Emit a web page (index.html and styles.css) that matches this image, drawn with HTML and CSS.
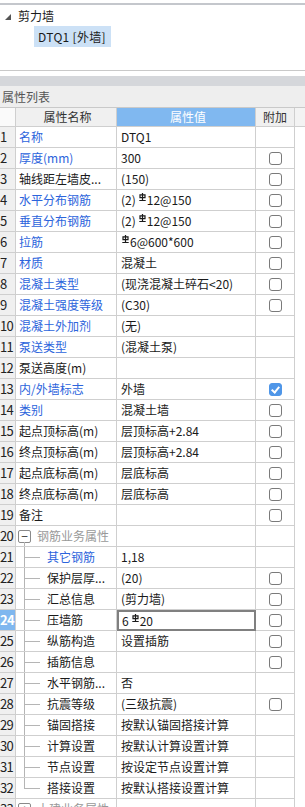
FILE: index.html
```html
<!DOCTYPE html>
<html lang="zh-CN">
<head>
    <meta charset="UTF-8">
    <meta name="viewport" content="width=device-width, initial-scale=1.0">
    <title>属性列表</title>
    <link rel="stylesheet" href="styles.css">
</head>
<body>
    <!-- 构件列表 -->
    <div class="top-line"></div>
    <div class="tree">
        <div class="tree-node"><span class="tri"></span>剪力墙</div>
        <div class="tree-leaf"><span class="sel">DTQ1 [外墙]</span></div>
    </div>
    <div class="gap"></div>
    <div class="band"></div>

    <!-- 属性列表 -->
    <div class="panel-title">属性列表</div>
    <div class="grid">
        <div class="row head">
            <div class="c0"></div>
            <div class="c1">属性名称</div>
            <div class="c2 on">属性值</div>
            <div class="c3">附加</div>
        </div>
        <div class="row"><div class="c0">1</div><div class="c1 blue">名称</div><div class="c2">DTQ1</div><div class="c3"></div></div>
        <div class="row"><div class="c0">2</div><div class="c1 blue">厚度(mm)</div><div class="c2">300</div><div class="c3"><i class="ck"></i></div></div>
        <div class="row"><div class="c0">3</div><div class="c1">轴线距左墙皮...</div><div class="c2">(150)</div><div class="c3"><i class="ck"></i></div></div>
        <div class="row"><div class="c0">4</div><div class="c1 blue">水平分布钢筋</div><div class="c2">(2)<svg class="gj" viewBox="0 0 7 8"><path d="M3.5 0v7.5M0.3 7.5h6.4M1 1.8h5v2.8h-5z"/></svg>12@150</div><div class="c3"><i class="ck"></i></div></div>
        <div class="row"><div class="c0">5</div><div class="c1 blue">垂直分布钢筋</div><div class="c2">(2)<svg class="gj" viewBox="0 0 7 8"><path d="M3.5 0v7.5M0.3 7.5h6.4M1 1.8h5v2.8h-5z"/></svg>12@150</div><div class="c3"><i class="ck"></i></div></div>
        <div class="row"><div class="c0">6</div><div class="c1 blue">拉筋</div><div class="c2"><svg class="gj first" viewBox="0 0 7 8"><path d="M3.5 0v7.5M0.3 7.5h6.4M1 1.8h5v2.8h-5z"/></svg>6@600*600</div><div class="c3"><i class="ck"></i></div></div>
        <div class="row"><div class="c0">7</div><div class="c1 blue">材质</div><div class="c2">混凝土</div><div class="c3"><i class="ck"></i></div></div>
        <div class="row"><div class="c0">8</div><div class="c1 blue">混凝土类型</div><div class="c2">(现浇混凝土碎石&lt;20)</div><div class="c3"><i class="ck"></i></div></div>
        <div class="row"><div class="c0">9</div><div class="c1 blue">混凝土强度等级</div><div class="c2">(C30)</div><div class="c3"><i class="ck"></i></div></div>
        <div class="row"><div class="c0">10</div><div class="c1 blue">混凝土外加剂</div><div class="c2">(无)</div><div class="c3"></div></div>
        <div class="row"><div class="c0">11</div><div class="c1 blue">泵送类型</div><div class="c2">(混凝土泵)</div><div class="c3"></div></div>
        <div class="row"><div class="c0">12</div><div class="c1">泵送高度(m)</div><div class="c2"></div><div class="c3"></div></div>
        <div class="row"><div class="c0">13</div><div class="c1 blue">内/外墙标志</div><div class="c2">外墙</div><div class="c3"><i class="ck on"></i></div></div>
        <div class="row"><div class="c0">14</div><div class="c1 blue">类别</div><div class="c2">混凝土墙</div><div class="c3"><i class="ck"></i></div></div>
        <div class="row"><div class="c0">15</div><div class="c1">起点顶标高(m)</div><div class="c2">层顶标高+2.84</div><div class="c3"><i class="ck"></i></div></div>
        <div class="row"><div class="c0">16</div><div class="c1">终点顶标高(m)</div><div class="c2">层顶标高+2.84</div><div class="c3"><i class="ck"></i></div></div>
        <div class="row"><div class="c0">17</div><div class="c1">起点底标高(m)</div><div class="c2">层底标高</div><div class="c3"><i class="ck"></i></div></div>
        <div class="row"><div class="c0">18</div><div class="c1">终点底标高(m)</div><div class="c2">层底标高</div><div class="c3"><i class="ck"></i></div></div>
        <div class="row"><div class="c0">19</div><div class="c1">备注</div><div class="c2"></div><div class="c3"><i class="ck"></i></div></div>
        <div class="row"><div class="c0">20</div><div class="c1 group open"><i class="tog">−</i>钢筋业务属性</div><div class="c2"></div><div class="c3"></div></div>
        <div class="row"><div class="c0">21</div><div class="c1 sub blue">其它钢筋</div><div class="c2">1,18</div><div class="c3"></div></div>
        <div class="row"><div class="c0">22</div><div class="c1 sub">保护层厚...</div><div class="c2">(20)</div><div class="c3"><i class="ck"></i></div></div>
        <div class="row"><div class="c0">23</div><div class="c1 sub">汇总信息</div><div class="c2">(剪力墙)</div><div class="c3"><i class="ck"></i></div></div>
        <div class="row cur"><div class="c0">24</div><div class="c1 sub">压墙筋</div><div class="c2 edit">6<svg class="gj" viewBox="0 0 7 8"><path d="M3.5 0v7.5M0.3 7.5h6.4M1 1.8h5v2.8h-5z"/></svg>20</div><div class="c3"><i class="ck"></i></div></div>
        <div class="row"><div class="c0">25</div><div class="c1 sub">纵筋构造</div><div class="c2">设置插筋</div><div class="c3"><i class="ck"></i></div></div>
        <div class="row"><div class="c0">26</div><div class="c1 sub">插筋信息</div><div class="c2"></div><div class="c3"><i class="ck"></i></div></div>
        <div class="row"><div class="c0">27</div><div class="c1 sub">水平钢筋...</div><div class="c2">否</div><div class="c3"></div></div>
        <div class="row"><div class="c0">28</div><div class="c1 sub">抗震等级</div><div class="c2">(三级抗震)</div><div class="c3"><i class="ck"></i></div></div>
        <div class="row"><div class="c0">29</div><div class="c1 sub">锚固搭接</div><div class="c2">按默认锚固搭接计算</div><div class="c3"></div></div>
        <div class="row"><div class="c0">30</div><div class="c1 sub">计算设置</div><div class="c2">按默认计算设置计算</div><div class="c3"></div></div>
        <div class="row"><div class="c0">31</div><div class="c1 sub">节点设置</div><div class="c2">按设定节点设置计算</div><div class="c3"></div></div>
        <div class="row"><div class="c0">32</div><div class="c1 sub last">搭接设置</div><div class="c2">按默认搭接设置计算</div><div class="c3"></div></div>
        <div class="row"><div class="c0">33</div><div class="c1 group"><i class="tog">+</i>土建业务属性</div><div class="c2"></div><div class="c3"></div></div>
    </div>
</body>
</html>
```

FILE: styles.css
```css
/* 전체 폰트 12px, 행 높이 21px(테두리 포함) */
html, body {margin: 0; padding: 0; background: #fff; height: 807px; overflow: hidden;}
body {font-family: "Noto Sans CJK SC", "Noto Sans", sans-serif; font-size: 12px; color: #1a1a1a;}

.top-line {height: 2px; margin-top: 3px; background: #c4c7cc;}
.tree {height: 66px; border-bottom: 1px solid #c9c9c9; box-sizing: border-box; padding-top: 1px;}
.tree-node {height: 20px; line-height: 20px; padding-left: 5px; display: flex; align-items: center;}
.tree-node .tri {width: 0; height: 0; border-left: 6px solid transparent; border-bottom: 6px solid #555; margin-right: 7px; margin-top: 2px;}
.tree-leaf {height: 21px; padding-left: 34px;}
.tree-leaf .sel {display: inline-block; height: 21px; line-height: 21px; padding: 0 5px 0 4px; background: #cce1f6; letter-spacing: 0.3px;}
.gap {height: 5px;}
.band {height: 10px; background: #d5d7db;}
.panel-title {height: 21px; line-height: 21px; padding-left: 2px; background: #eeeeee; color: #555; border-bottom: 1px solid #c9c9c9;}

.grid {width: 305px;}
.row {display: grid; grid-template-columns: 16px 101px 139px 39px 10px; height: 21px;}
.row > div {border-right: 1px solid #cfcfcf; border-bottom: 1px solid #cfcfcf; box-sizing: border-box; line-height: 20px; white-space: nowrap; overflow: hidden; position: relative;}
.row::after {content: ""; border-bottom: 0;}
.row .c0 {background: #f0f0f0; font-size: 13px; padding-left: 0; letter-spacing: -0.6px; color: #222;}
.row .c1 {padding-left: 3px;}
.row .c2 {padding-left: 4px;}
.row .c3 {display: flex; align-items: center; justify-content: center;}
.blue {color: #2c64dc;}

.head {height: 19px;}
.head > div {line-height: 18px; text-align: center; background: #f0f0f0; color: #333;}
.head .c0 {background: #fafafa;}
.head .c2.on {background: #80b8f0; color: #fff;}
.head::after {background: #f3f3f3; border-bottom: 1px solid #cfcfcf;}

.ck {display: block; width: 13px; height: 13px; border: 1px solid #7a7a7a; border-radius: 3px; box-sizing: border-box; background: #fff; position: relative;}
.ck.on {background: #4f96e8; border-color: #4f96e8;}
.ck.on::after {content: ""; position: absolute; left: 3px; top: 1px; width: 3px; height: 6px; border-right: 2px solid #fff; border-bottom: 2px solid #fff; transform: rotate(40deg);}

.gj {width: 7px; height: 8px; vertical-align: 4px; margin: 0 1px 0 3px; fill: none; stroke: #1a1a1a; stroke-width: 1.2;}
.gj.first {margin-left: 1px;}

.group {color: #999; padding-left: 2px !important; display: flex; align-items: center;}
.tog {display: inline-flex; width: 13px; height: 13px; border: 1px solid #8a8a8a; border-radius: 2px; box-sizing: border-box; align-items: center; justify-content: center; font-style: normal; color: #333; font-size: 12px; line-height: 1; margin-right: 6px; background: #fff;}
.group.open::after {content: ""; position: absolute; left: 8px; top: 16px; bottom: 0; border-left: 1px solid #b5b5b5;}
.sub {padding-left: 31px !important;}
.sub::before {content: ""; position: absolute; left: 8px; top: 0; bottom: 0; border-left: 1px solid #b5b5b5;}
.sub::after {content: ""; position: absolute; left: 8px; width: 16px; top: 10px; border-top: 1px solid #b5b5b5;}
.sub.last::before {bottom: 10px;}

.cur .c0 {background: #7fb7ef; color: #fff; font-weight: bold;}
.c2.edit {border: 2px solid #808080; padding-left: 3px; line-height: 17px;}
```
